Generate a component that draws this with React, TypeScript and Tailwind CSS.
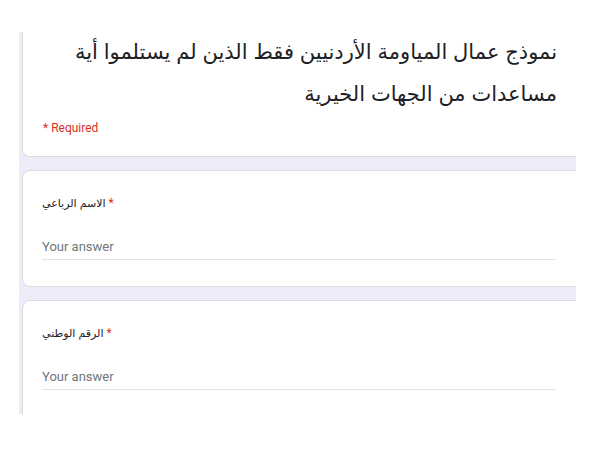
const arabic = '"Liberation Sans", "DejaVu Sans", sans-serif';

export default function App() {
  return (
    <div className="h-[450px] w-[600px] overflow-hidden bg-white pt-[32px]">
      <div className="ml-[19px] flex h-[382px] w-[557px] flex-col gap-[13px] overflow-hidden bg-[#f0ebf8] pl-[3px]">
        <HeaderCard />
        <QuestionCard label="الاسم الرباعي" height="h-[117px]" />
        <QuestionCard label="الرقم الوطني" height="h-[130px]" />
      </div>
    </div>
  );
}

function HeaderCard() {
  return (
    <div className="h-[125px] w-[570px] shrink-0 rounded-b-lg border border-t-0 border-[#dadce0] bg-white pl-[20px]">
      <div className="w-[514px]">
        <h1
          dir="rtl"
          className="-mt-[1px] text-[21px] leading-[42px] text-[#202124]"
          style={{ fontFamily: arabic }}
        >
          نموذج عمال المياومة الأردنيين فقط الذين لم يستلموا أية
          <br />
          مساعدات من الجهات الخيرية
        </h1>
        <div className="mt-[5px] font-['Roboto',sans-serif] text-[12px] leading-[16px] text-[#d93025]">
          * Required
        </div>
      </div>
    </div>
  );
}

function QuestionCard({ label, height }: { label: string; height: string }) {
  return (
    <div
      className={`${height} w-[570px] shrink-0 rounded-lg border border-[#dadce0] bg-white pl-[19px] pt-[24px]`}
    >
      <div className="w-[514px]">
        <div className="text-[11px] leading-[16px] text-[#202124]">
          <span style={{ fontFamily: arabic }}>{label}</span>
          <span className="font-['Roboto',sans-serif] text-[12px] text-[#d93025]"> *</span>
        </div>
        <div className="mt-[26px] h-[23px] border-b border-[#e3e3e3] font-['Roboto',sans-serif] text-[13px] leading-[20px] text-[#70757a]">
          Your answer
        </div>
      </div>
    </div>
  );
}
